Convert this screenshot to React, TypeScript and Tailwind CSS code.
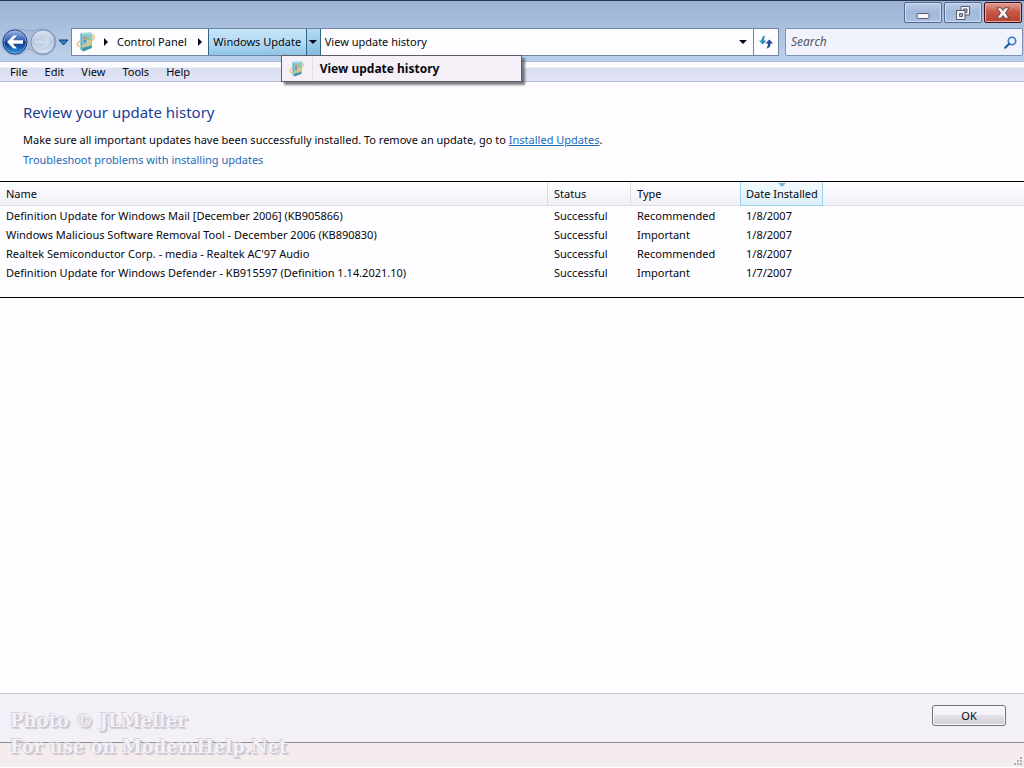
import type { ReactNode } from "react";

interface UpdateItem {
	id: string;
	name: string;
	status: string;
	type: string;
	date: string;
}

const UPDATES: UpdateItem[] = [
	{
		id: "mail",
		name: "Definition Update for Windows Mail [December 2006] (KB905866)",
		status: "Successful",
		type: "Recommended",
		date: "1/8/2007",
	},
	{
		id: "msrt",
		name: "Windows Malicious Software Removal Tool - December 2006 (KB890830)",
		status: "Successful",
		type: "Important",
		date: "1/8/2007",
	},
	{
		id: "realtek",
		name: "Realtek Semiconductor Corp. - media - Realtek AC'97 Audio",
		status: "Successful",
		type: "Recommended",
		date: "1/8/2007",
	},
	{
		id: "defender",
		name: "Definition Update for Windows Defender - KB915597 (Definition 1.14.2021.10)",
		status: "Successful",
		type: "Important",
		date: "1/7/2007",
	},
];

const MENUS = ["File", "Edit", "View", "Tools", "Help"];

const UpdateIcon = ({ className }: { className: string }) => (
	<svg viewBox="0 0 20 22" className={className} aria-hidden="true">
		<path d="M4.500 2 15 1l1.500 2-1 14L7 20.500l-2.500-2z" fill="#a9dbe2" />
		<path d="M4.500 2 6 3.500 7 20.500l-2.500-2z" fill="#62adbb" />
		<path d="M6 3.500 16.500 3l-1 14L7 20.500z" fill="#86ccd4" />
		<path d="M7 17l8.700-3-.2 3L7 20.500z" fill="#3d94a6" />
		<path d="M7.500 6q2-1 3.200 0l-.3 2.600q-1.500-.8-2.800 0z" fill="#e0875c" />
		<path d="M11.200 6.200q1.500.8 3 0l-.3 2.600q-1.500.8-3 0z" fill="#9cc565" />
		<path d="M7.500 9.200q1.500-.8 2.800 0l-.2 2.600q-1.300-.8-2.600 0z" fill="#5a92cf" />
		<path d="M10.900 9.400q1.500.8 3 0l-.3 2.600q-1.500.8-2.900 0z" fill="#f0d467" />
		<path
			d="M4.500 9.500C1.500 11.500 0 14 2 15c3 1.500 10-1 14-5.500 3.500-3.500 3-5.500-.5-5"
			fill="none"
			stroke="#efbf70"
			strokeWidth="1.300"
		/>
		<path d="M10 15.500l3.500-4 1.200 3.500z" fill="#efbf70" />
	</svg>
);

const Arrow = ({ dir }: { dir: "right" | "down" }) => (
	<svg
		viewBox="0 0 8 8"
		className="h-2 w-2 shrink-0"
		fill="#06061c"
		aria-hidden="true"
	>
		{dir === "right" ? <path d="M2 0v8l4-4z" /> : <path d="M0 2h8L4 6z" />}
	</svg>
);

const CaptionButton = ({
	label,
	close,
	children,
}: {
	label: string;
	close?: boolean;
	children: ReactNode;
}) => (
	<button
		aria-label={label}
		className={
			close
				? "flex h-[21px] w-[38px] items-center justify-center rounded-[2px] border border-[#42101c] bg-linear-to-b from-[#dda197] via-[#c8594a] via-45% to-[#b53f2c] shadow-[inset_0_0_0_1px_#e6aaa2]"
				: "flex h-[21px] w-[38px] items-center justify-center rounded-[2px] border border-[#54698f] bg-linear-to-b from-[#bccde7] via-[#a3b9da] via-45% to-[#a9c0e2] shadow-[inset_0_0_0_1px_#cddcf0]"
		}
	>
		{children}
	</button>
);

const NavButtons = () => (
	<div className="relative flex h-7 w-[71px] shrink-0 items-center">
		<svg
			viewBox="0 0 71 28"
			className="pointer-events-none absolute inset-0"
			aria-hidden="true"
		>
			<defs>
				<linearGradient id="back" x1="0" y1="0" x2="0" y2="1">
					<stop offset="0" stopColor="#9cb9e8" />
					<stop offset=".45" stopColor="#2f5db0" />
					<stop offset=".5" stopColor="#0b2f86" />
					<stop offset="1" stopColor="#2f9be6" />
				</linearGradient>
				<linearGradient id="fwd" x1="0" y1="0" x2="0" y2="1">
					<stop offset="0" stopColor="#dbe5f3" />
					<stop offset=".5" stopColor="#b9c9de" />
					<stop offset="1" stopColor="#d7e3f3" />
				</linearGradient>
			</defs>
			<path
				d="M15 1Q22 1 27 2.500q3 .5 6 0Q37 1 43 1a13 13 0 0 1 0 26q-8 0-11-5-3-2-6 0-4 5-11 5a13 13 0 0 1 0-26z"
				fill="#a9bddb"
				stroke="#8ea5c8"
			/>
			<circle cx="15" cy="14" r="12" fill="url(#back)" stroke="#2a4277" />
			<circle cx="15" cy="14" r="11" fill="none" stroke="#a8c6ee" strokeOpacity=".5" />
			<path
				d="M7 14l6.500-6.500h3.500L12.700 12.300H23v3.400H12.700L17 20.500h-3.500z"
				fill="#fff"
			/>
			<circle cx="43" cy="14" r="12" fill="url(#fwd)" stroke="#7f92b2" />
			<path
				d="M51 14l-6.500-6.500H41l4.300 4.800H35v3.400h10.300L41 20.500h3.500z"
				fill="#d0dcec"
				stroke="#b9c8dd"
				strokeWidth=".5"
			/>
			<path d="M59 12h9l-4.500 5z" fill="#2f7fd0" stroke="#17376f" />
		</svg>
		<button aria-label="Back" className="h-7 w-7 rounded-full" />
		<button aria-label="Forward" className="h-7 w-7 rounded-full" />
		<button aria-label="Recent pages" className="h-7 w-3" />
	</div>
);

const AddressBar = () => (
	<div className="flex h-7 min-w-0 flex-1 border border-[#6f85a8] bg-[#fdfcff]">
		<UpdateIcon className="mt-px ml-1 h-6 w-5 shrink-0" />
		<div className="flex items-center pl-[6px]">
			<Arrow dir="right" />
		</div>
		<button className="pr-[9px] pl-[7px] whitespace-nowrap">Control Panel</button>
		<div className="flex items-center pr-1">
			<Arrow dir="right" />
		</div>
		<button className="w-[99px] shrink-0 border-x border-[#2f6683] bg-linear-to-b from-[#c6e5f8] via-[#b5dbf3] to-[#8fc3e6] text-center whitespace-nowrap">
			Windows Update
		</button>
		<div className="relative flex">
			<button
				aria-label="Windows Update locations"
				aria-expanded="true"
				className="flex w-[14px] items-center justify-center border-r border-[#2f6683] bg-linear-to-b from-[#b5dbf3] to-[#82bae0]"
			>
				<Arrow dir="down" />
			</button>
			<div
				role="menu"
				className="absolute top-[26px] -left-[26px] z-10 w-[241px] border border-[#5f5d66] bg-[#f5f0f7] shadow-[3px_3px_2px_rgba(60,60,70,0.65)]"
			>
				<button
					role="menuitem"
					className="flex h-[25px] w-full items-center text-left text-[12px] leading-4 font-bold"
				>
					<span className="flex h-full w-[31px] items-center justify-center border-r border-[#e2dde6]">
						<UpdateIcon className="h-[18px] w-4" />
					</span>
					<span className="pl-[7px] whitespace-nowrap">View update history</span>
				</button>
			</div>
		</div>
		<button className="pl-1 whitespace-nowrap">View update history</button>
		<button
			aria-label="Previous locations"
			className="ml-auto flex w-[21px] items-center justify-center"
		>
			<Arrow dir="down" />
		</button>
		<button
			aria-label="Refresh"
			className="flex w-[25px] items-center justify-center border-l border-[#6f85a8]"
		>
			<svg viewBox="0 0 14 14" className="h-[14px] w-[14px]" aria-hidden="true">
				<path d="M6.500 .5Q2.500 1 2.500 5.500H0L3.700 9.500 7.500 5.500H5Q5 2.500 6.500 .5z" fill="#2b8ac0" />
				<path d="M7.500 13.500Q11.500 13 11.500 8.500H14L10.300 4.500 6.500 8.500H9Q9 11.500 7.500 13.500z" fill="#1f4a8c" />
			</svg>
		</button>
	</div>
);

const SearchBox = () => (
	<label className="flex h-7 w-[238px] shrink-0 items-center rounded-[2px] border border-[#7d93b6] bg-[#f0f2fc] pr-[5px] pl-[5px]">
		<input
			type="search"
			aria-label="Search"
			placeholder="Search"
			className="min-w-0 flex-1 text-[12px] italic outline-none placeholder:text-[#55565e]"
		/>
		<svg viewBox="0 0 13 13" className="h-[13px] w-[13px]" aria-hidden="true">
			<circle cx="8" cy="5" r="3.700" fill="#e9f2fc" stroke="#3a76c4" strokeWidth="1.600" />
			<path d="M5.200 7.800 1.200 11.800" stroke="#27559f" strokeWidth="2" strokeLinecap="round" />
		</svg>
	</label>
);

const App = () => {
	return (
		<div className="flex min-h-screen w-full flex-col bg-[#fefdff] font-['Noto_Sans',sans-serif] text-[11px] leading-4 text-[#08080c]">
			{/* TITLE BAR */}
			<header className="border-t border-[#2b3550] bg-linear-to-b from-[#9bb3d4] to-[#bdd1ec]">
				<div className="flex justify-end gap-[2px] pt-px pr-[2px] pb-[5px]">
					<CaptionButton label="Minimize">
						<svg viewBox="0 0 14 14" className="mt-1 h-[14px] w-[14px]" aria-hidden="true">
							<rect x="1" y="5.500" width="12" height="5" rx="1" fill="#f6f6fa" stroke="#555b6c" />
						</svg>
					</CaptionButton>
					<CaptionButton label="Restore">
						<svg viewBox="0 0 16 16" className="h-4 w-4" aria-hidden="true">
							<path d="M6 1.500h8.500v8.500H6z" fill="#f6f6fa" stroke="#555b6c" />
							<path d="M8.500 4h3.500v3.500H8.500z" fill="#9fb2d2" stroke="#555b6c" />
							<path d="M1.500 5.500H10V14.500H1.500z" fill="#f6f6fa" stroke="#555b6c" />
							<path d="M4.500 8.500h3v3h-3z" fill="#9fb2d2" stroke="#555b6c" />
						</svg>
					</CaptionButton>
					<CaptionButton label="Close" close>
						<svg viewBox="0 0 14 12" className="h-3 w-[14px]" aria-hidden="true">
							<path
								d="M1 .8h4l2 2.600 2-2.600h4L9.500 6l3.500 5.200H9L7 8.600 5 11.200H1L4.500 6z"
								fill="#f8f4f5"
								stroke="#5d3a43"
								strokeWidth=".9"
							/>
						</svg>
					</CaptionButton>
				</div>
				<nav className="flex items-center pr-px pb-[5px]">
					<NavButtons />
					<AddressBar />
					<div className="w-[6px]" />
					<SearchBox />
				</nav>
			</header>

			{/* MENU BAR */}
			<div className="flex h-[21px] items-center gap-[5px] border-y border-t-[#a9bad8] border-b-[#b4bbd6] bg-linear-to-b from-[#fcfcff] from-25% via-[#d9def0] via-35% to-[#e1e3f6] pl-1">
				{MENUS.map((menu) => (
					<button key={menu} className="px-[6px]">
						{menu}
					</button>
				))}
			</div>

			<main className="flex-1">
				<section className="px-[23px] pt-[19px] pb-[13px]">
					<h1 className="text-[15px] leading-[22px] text-[#1c3f94]">
						Review your update history
					</h1>
					<p className="mt-[9px]">
						Make sure all important updates have been successfully installed. To
						remove an update, go to{" "}
						<a href="#installed" className="text-[#1b6bb8] underline">
							Installed Updates
						</a>
						.
					</p>
					<a href="#troubleshoot" className="mt-1 inline-block text-[#1b6bb8]">
						Troubleshoot problems with installing updates
					</a>
				</section>

				{/* HISTORY */}
				<div className="border-y border-black pb-[15px]">
					<table className="w-full table-fixed border-separate border-spacing-0 text-left whitespace-nowrap">
						<colgroup>
							<col className="w-[548px]" />
							<col className="w-[83px]" />
							<col className="w-[109px]" />
							<col className="w-[83px]" />
							<col />
						</colgroup>
						<thead>
							<tr className="h-6 bg-linear-to-b from-[#fefdff] to-[#f2f0f7]">
								<th className="border-r border-b border-[#dedbe3] p-0 pl-[6px] font-normal">Name</th>
								<th className="border-r border-b border-[#dedbe3] p-0 pl-[6px] font-normal">Status</th>
								<th className="border-b border-[#dedbe3] p-0 pl-[6px] font-normal">Type</th>
								<th
									aria-sort="descending"
									className="relative border-x border-b border-[#9fd3ea] bg-linear-to-b from-[#f4fafe] to-[#ddf0fa] p-0 pl-[5px] font-normal"
								>
									<svg
										viewBox="0 0 8 4"
										className="absolute top-px left-[37px] h-1 w-2"
										aria-hidden="true"
									>
										<path d="M0 0h8L4 4z" fill="#7fb4d4" />
									</svg>
									Date Installed
								</th>
								<td className="border-b border-[#dedbe3] p-0" />
							</tr>
						</thead>
						<tbody>
							{UPDATES.map((item) => (
								<tr key={item.id} className="h-[19px]">
									<td className="p-0 pl-[6px]">{item.name}</td>
									<td className="p-0 pl-[6px]">{item.status}</td>
									<td className="p-0 pl-[6px]">{item.type}</td>
									<td className="p-0 pl-[6px]">{item.date}</td>
									<td className="p-0" />
								</tr>
							))}
						</tbody>
					</table>
				</div>
			</main>

			{/* FOOTER */}
			<footer className="relative">
				<div className="flex h-[49px] items-start justify-end border-t border-[#c9c6d0] bg-[#f4f0f7] pt-[11px] pr-[18px]">
					<button className="h-[21px] w-[74px] rounded-[3px] border border-[#706e78] bg-linear-to-b from-[#f5f3f7] from-45% via-[#e4e2e8] via-50% to-[#cfcdd5] shadow-[inset_0_0_0_1px_#fbfaff]">
						OK
					</button>
				</div>
				<div className="flex h-[26px] items-end justify-end border-t border-b border-t-[#8e8b92] border-b-white bg-[#f5ecee] pr-px">
					<svg viewBox="0 0 10 10" className="h-[10px] w-[10px]" fill="#b5adb3" aria-hidden="true">
						<path d="M7 0h2v2H7zM4 3h2v2H4zM7 3h2v2H7zM1 6h2v2H1zM4 6h2v2H4zM7 6h2v2H7z" />
					</svg>
				</div>
				<div className="pointer-events-none absolute top-[15px] left-[10px] font-['DejaVu_Serif',serif] text-[18px] leading-[26px] font-bold whitespace-nowrap text-[#f3f1f7] [text-shadow:1px_1px_1px_#c6c1cc,-1px_-1px_1px_#d3cfd9,2px_2px_1px_#d0ccd6]">
					<p>Photo © JLMeller</p>
					<p>For use on ModemHelp.Net</p>
				</div>
			</footer>
		</div>
	);
};

export default App;
